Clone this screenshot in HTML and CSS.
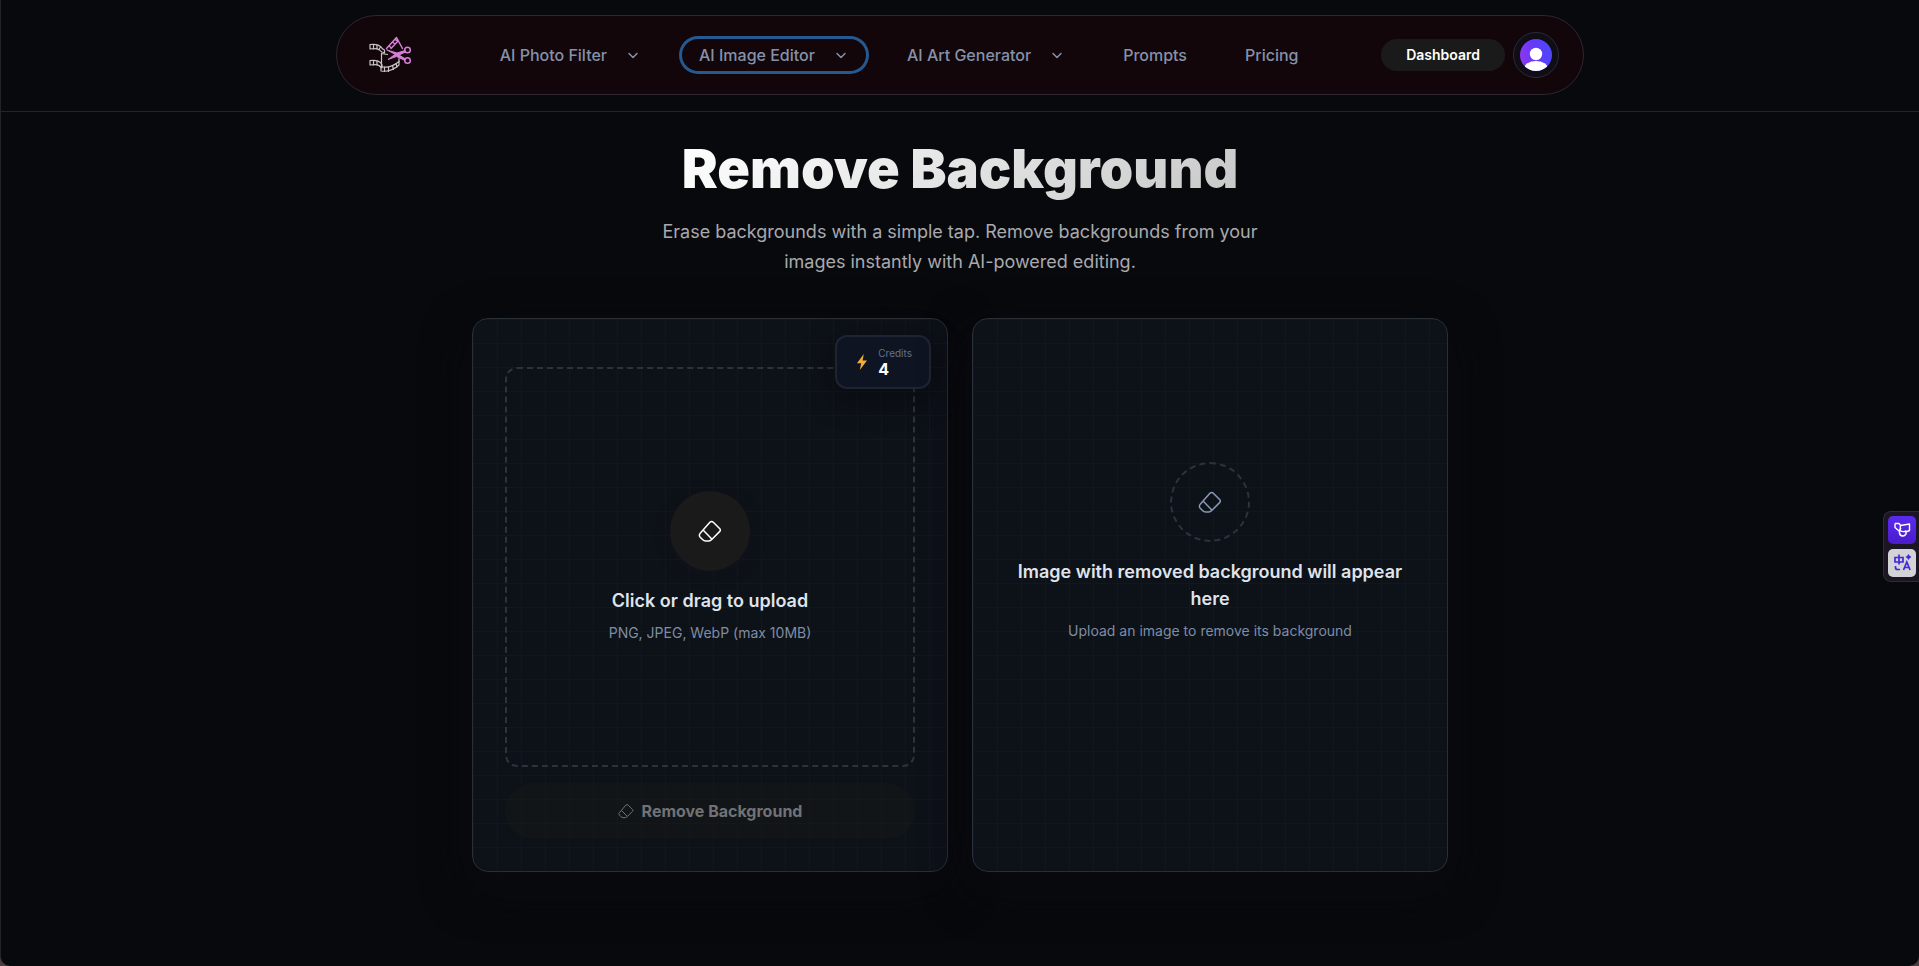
FILE: index.html
```html
<!DOCTYPE html>
<html lang="en">
<head>
<meta charset="utf-8">
<meta name="viewport" content="width=device-width, initial-scale=1">
<title>Remove Background</title>
<link rel="stylesheet" href="styles.css">
</head>
<body>
<svg width="0" height="0" class="sprite" aria-hidden="true">
  <symbol id="eraser" viewBox="0 0 24 24">
    <path d="M11.9 3.2a2.4 2.4 0 0 1 3.4 0l6.5 6.5a1.9 1.9 0 0 1 0 2.7L14 20.3Q12.400 22 10.800 22H7.600Q6 22 4.800 20.800L2.200 18.200a2.700 2.700 0 0 1 0-3.900Z"/>
    <path d="M5.300 11.200 14 20.200"/>
  </symbol>
  <symbol id="chevron" viewBox="0 0 16 16"><path d="M4 6.500 8 10.500 12 6.500"/></symbol>
</svg>
<div class="page">
  <header class="header">
    <div class="bar">
      <a href="#" class="logo" aria-label="Home">
        <svg viewBox="1 0 56 54" fill="none" stroke-linecap="round" stroke-linejoin="round">
          <g stroke="#c9c4c4" stroke-width="1.200">
            <path d="M10 16.500q8-1 11 2.500 1 2 3.500 3v3q-3-.5-5-3-2.500-2-9.500-1z"/>
            <path d="M13.500 16.500v4.500M17 17v4M20.500 19l-1.500 2.500"/>
            <path d="M10 32.500q8-1 11 2.500l1 2v3q-2-1.500-3-2.500-2-1.500-9-.5z"/>
            <path d="M13.500 32.500v4.500M17 33v4"/>
            <path d="M21.500 25v13M21.500 25.500l6 1"/>
            <path d="M21 38.500q9 2.500 18-5v3.500q-8 7.500-18 6z"/>
            <path d="M24.500 39v4.500M28.500 39v4.500M32.500 37.500l1 4M36 35.500l1 3.500M39 33.500v-3"/>
          </g>
          <g stroke="#d67fd6" stroke-width="1.500">
            <path d="M26.500 20.500 36.500 9.500 42.500 20.500M31 20.500l7-7.500M29 18l2.500 2M32.500 14l2.500 2M35 11.500l3 1.500"/>
            <circle cx="47.500" cy="22" r="2.800"/><circle cx="47.500" cy="32.500" r="2.800"/>
            <path fill="#d67fd6" stroke-width="1" d="m27 22 10 3 8-2.500.5 1.500-6.500 3 6.500 4-.5 1.500-8.500-4-8.500 3 7-5z"/>
          </g>
        </svg>
      </a>
      <nav class="menu">
        <button type="button" class="item">AI Photo Filter<svg class="chev"><use href="#chevron"/></svg></button>
        <button type="button" class="item focused">AI Image Editor<svg class="chev"><use href="#chevron"/></svg></button>
        <button type="button" class="item">AI Art Generator<svg class="chev"><use href="#chevron"/></svg></button>
        <a href="#" class="item">Prompts</a>
        <a href="#" class="item">Pricing</a>
      </nav>
      <div class="account">
        <a href="#" class="dashboard">Dashboard</a>
        <button type="button" class="avatar" aria-label="Account">
          <svg viewBox="0 0 32 32">
            <defs>
              <linearGradient id="av" x1="0" y1=".7" x2="1" y2=".5"><stop offset="0" stop-color="#9038f0"/><stop offset=".5" stop-color="#6438fb"/><stop offset="1" stop-color="#4d48fa"/></linearGradient>
              <clipPath id="round"><circle cx="16" cy="16" r="16"/></clipPath>
            </defs>
            <g clip-path="url(#round)"><path fill="url(#av)" d="M0 0h32v32H0z"/><circle cx="16" cy="15" r="6.200" fill="#fff"/><ellipse cx="16" cy="30" rx="12" ry="8" fill="#fff"/></g>
          </svg>
        </button>
      </div>
    </div>
  </header>

  <main class="main">
    <h1 class="title">Remove Background</h1>
    <p class="lead">Erase backgrounds with a simple tap. Remove backgrounds from your images instantly with AI-powered editing.</p>
    <div class="panels">
      <section class="card upload">
        <div class="credits">
          <svg viewBox="0 0 16 16" class="bolt"><path fill="#f5ae35" d="M9.800 0 3 9.200h4.200L5.800 16 13 6.600H8.600z"/></svg>
          <div><div class="credits-label">Credits</div><div class="credits-value">4</div></div>
        </div>
        <button type="button" class="dropzone">
          <span class="disc"><svg class="eraser"><use href="#eraser"/></svg></span>
          <span class="heading">Click or drag to upload</span>
          <span class="hint">PNG, JPEG, WebP (max 10MB)</span>
        </button>
        <button type="button" class="submit" disabled><svg class="eraser small"><use href="#eraser"/></svg>Remove Background</button>
      </section>
      <section class="card">
        <div class="result">
          <span class="disc empty"><svg class="eraser"><use href="#eraser"/></svg></span>
          <span class="heading">Image with removed background will appear here</span>
          <span class="hint">Upload an image to remove its background</span>
        </div>
      </section>
    </div>
  </main>
</div>

<aside class="dock">
  <button type="button" class="tool violet" aria-label="Assistant">
    <svg viewBox="0 0 28 28" fill="none" stroke="#fff" stroke-width="1.400" stroke-linejoin="round"><path d="M7 7.500h4l1.500 2 9-1.500v6.500l-3.500 1.500M7 7.500v4l4 3.500 2-3M12.500 9.500l-.5 5q3 2 6 .5v3q-2 3-5 1.500-2-1-1.500-4.500"/></svg>
  </button>
  <button type="button" class="tool light" aria-label="Translate">
    <svg viewBox="0 0 28 28" fill="none" stroke="#4028e0" stroke-width="1.700"><path d="M7 8.500h8v4.500H7zM11 5.500v10M7.500 17v1.500q0 2 2 2H12"/><path d="m15.500 21 3.300-8 3.300 8M16.500 18.500h4.600"/><path fill="#4028e0" stroke="none" d="m20.500 5 1.200 1.800L23.500 8l-1.800 1.200-1.200 1.800-1.200-1.800L17.500 8l1.800-1.200z"/></svg>
  </button>
</aside>
</body>
</html>
```
FILE: styles.css
```css
* { box-sizing: border-box; }

body {
  margin: 0;
  background: #4a4044;
  font-family: Inter, "Liberation Sans", sans-serif;
  color: #dfe3ec;
}

button { font: inherit; color: inherit; background: none; border: 0; padding: 0; cursor: pointer; }
a { color: inherit; text-decoration: none; }
svg { display: block; flex: none; }
.sprite { position: absolute; }

.page {
  min-height: 100vh;
  background: #08090d;
  border-left: 1px solid #222328;
  border-radius: 0 0 10px 10px;
}

.header { padding: 15px 16px 16px; border-bottom: 1px solid #23242a; }

.bar {
  display: flex;
  align-items: center;
  justify-content: space-between;
  max-width: 1248px;
  min-height: 80px;
  margin: 0 auto;
  padding: 0 24px;
  background: #12060b;
  border: 1px solid #2d262e;
  border-radius: 40px;
}

.logo svg { width: 56px; height: 54px; }

.menu { display: flex; align-items: center; gap: 24px; }

.item {
  display: flex;
  align-items: center;
  gap: 18px;
  height: 32px;
  padding: 0 17px;
  border-radius: 16px;
  font-size: 16px;
  font-weight: 500;
  color: #8492a9;
  white-space: nowrap;
}
.item.focused { box-shadow: 0 0 0 3px #245a91; }
.chev { width: 16px; height: 16px; fill: none; stroke: currentColor; stroke-width: 1.5; stroke-linecap: round; stroke-linejoin: round; }

.account { display: flex; align-items: center; gap: 8px; }
.dashboard {
  padding: 0 25px;
  border-radius: 16px;
  background: #1a1a1a;
  color: #fff;
  font-size: 14px;
  font-weight: 600;
  line-height: 32px;
}
.avatar { padding: 6px; border: 1px solid #2b2b37; border-radius: 50%; background: #0f0e17; }
.avatar svg { width: 32px; height: 32px; }

.main { padding: 25px 16px 64px; text-align: center; }

.title {
  width: fit-content;
  margin: 0 auto 16px;
  font-size: 54px;
  font-weight: 900;
  line-height: 64px;
  background: linear-gradient(135deg, #fff 0%, #c8c8c8 100%);
  -webkit-background-clip: text;
  background-clip: text;
  color: transparent;
}

.lead { max-width: 600px; margin: 0 auto 41px; font-size: 18px; line-height: 30px; color: #a9aaad; }

.panels { display: grid; grid-template-columns: 1fr 1fr; gap: 24px; max-width: 976px; margin: 0 auto; }

.card {
  position: relative;
  padding: 32px;
  border: 1px solid #2a2e37;
  border-radius: 16px;
  background:
    linear-gradient(to right, #12161d 1px, transparent 1px) 0 0 / 24px 24px,
    linear-gradient(to bottom, #12161d 1px, transparent 1px) 0 0 / 24px 24px,
    #0d1118;
  box-shadow: 0 16px 48px #0a0a0f;
}
.upload { display: flex; flex-direction: column; gap: 16px; padding-top: 48px; }

.credits {
  position: absolute;
  top: 16px;
  right: 16px;
  display: flex;
  align-items: center;
  gap: 8px;
  padding: 9px 17px;
  border: 2px solid #1e2431;
  border-radius: 12px;
  background: #0f1422;
  box-shadow: 0 8px 32px rgba(0, 0, 0, .4);
  text-align: left;
}
.bolt { width: 16px; height: 16px; }
.credits-label { font-size: 10px; line-height: 14px; color: #64708a; }
.credits-value { font-size: 16px; line-height: 18px; font-weight: 700; color: #fff; }

.dropzone, .result {
  display: flex;
  flex-direction: column;
  align-items: center;
  justify-content: center;
  min-height: 400px;
}
.dropzone { border: 2px dashed #2d323b; border-radius: 12px; }

.disc {
  display: grid;
  place-items: center;
  width: 80px;
  height: 80px;
  margin-bottom: 16px;
  border-radius: 50%;
  background: #1a1a1a;
  color: #fff;
  box-shadow: 0 4px 16px rgba(26, 26, 26, .3);
}
.disc.empty { background: none; border: 2px dashed #2d323b; color: #8b9ab3; box-shadow: none; }
.eraser { width: 24px; height: 24px; fill: none; stroke: currentColor; stroke-width: 1.500; stroke-linejoin: round; }
.eraser.small { width: 16px; height: 16px; }

.heading { margin-bottom: 8px; font-size: 18px; font-weight: 600; line-height: 27px; color: #dfe3ec; }
.hint { font-size: 14px; line-height: 21px; color: #7e8da5; }

.submit {
  display: flex;
  align-items: center;
  justify-content: center;
  gap: 8px;
  height: 56px;
  border-radius: 28px;
  background: rgba(24, 25, 24, .5);
  color: #717275;
  font-size: 16px;
  font-weight: 700;
  cursor: default;
}

.dock {
  position: fixed;
  top: 511px;
  right: 0;
  display: grid;
  gap: 5px;
  padding: 4px 3px 4px 4px;
  border: 1px solid #302b38;
  border-right: 0;
  border-radius: 8px 0 0 8px;
  background: #1b1524;
}
.tool { width: 28px; height: 28px; border-radius: 5px; }
.violet { background: linear-gradient(#5a2af0, #4a1ccb); }
.light { background: #d3d3d5; }
```
